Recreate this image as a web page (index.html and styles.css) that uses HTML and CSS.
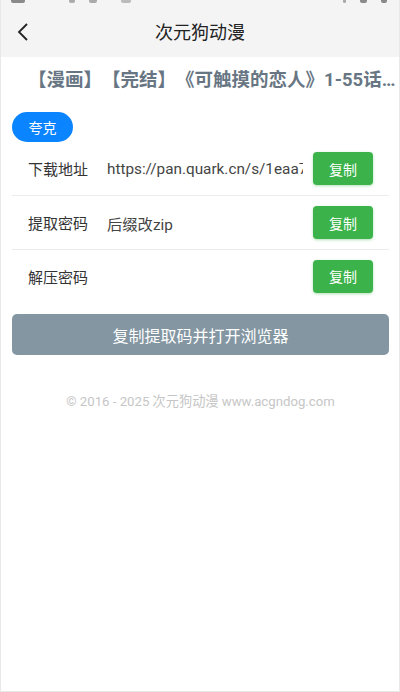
FILE: index.html
```html
<!DOCTYPE html>
<html lang="zh">
<head>
<meta charset="utf-8">
<link rel="stylesheet" href="styles.css">
</head>
<body>
<div class="frame">
  <div class="statusbar">
    <span class="sb-left"><i class="dot d1"></i><i class="dot d2"></i><i class="dot d3"></i><i class="dot d4"></i></span>
    <span class="sb-right"><i class="dot d5"></i><i class="dot d6"></i><i class="dot d7"></i></span>
  </div>
  <header class="topbar">
    <svg class="back" width="14" height="20" viewBox="0 0 14 20"><path d="M11 2 L3 10 L11 18" fill="none" stroke="#222" stroke-width="1.8"/></svg>
    <h1 class="title">次元狗动漫</h1>
  </header>
  <div class="headline"><span class="hl-tag">【漫画】</span>【完结】《可触摸的恋人》1-55话（完结）</div>
  <main class="content">
    <button class="pill">夸克</button>
    <div class="row">
      <span class="label">下载地址</span>
      <span class="value">https://pan.quark.cn/s/1eaa7c9b2f1d</span>
      <button class="copy">复制</button>
    </div>
    <div class="row">
      <span class="label">提取密码</span>
      <span class="value">后缀改zip</span>
      <button class="copy">复制</button>
    </div>
    <div class="row last">
      <span class="label">解压密码</span>
      <span class="value"></span>
      <button class="copy">复制</button>
    </div>
    <button class="open">复制提取码并打开浏览器</button>
    <p class="footer">© 2016 - 2025 次元狗动漫 www.acgndog.com</p>
  </main>
</div>
</body>
</html>
```
FILE: styles.css
```css
* { box-sizing: border-box; }
html, body { margin: 0; padding: 0; background: #fff; }
body {
  font-family: Roboto, "Noto Sans CJK SC", sans-serif;
  color: #333;
  text-spacing-trim: space-all;
}
.frame {
  width: 400px;
  height: 692px;
  border: 1px solid #e8e8e8;
  border-top: none;
  background: #fff;
  overflow: hidden;
}
.statusbar {
  height: 6px;
  background: #f4f4f4;
  display: flex;
  justify-content: space-between;
  padding: 0 10px;
}
.sb-left, .sb-right { display: flex; gap: 14px; align-items: flex-start; }
.dot { display: block; height: 3px; width: 10px; background: #8a8a8a; border-radius: 0 0 2px 2px; }
.d1 { width: 14px; }
.d2 { width: 6px; margin-left: 30px; background: #aaa; }
.d3 { width: 8px; background: #aaa; }
.d4 { width: 10px; margin-left: 10px; background: #bbb; }
.d5 { width: 3px; background: #aaa; }
.d6 { width: 7px; }
.d7 { width: 6px; margin-right: 2px; }
.topbar {
  height: 51px;
  background: #f4f4f4;
  display: flex;
  align-items: center;
  justify-content: center;
  position: relative;
}
.back { position: absolute; left: 15px; top: 16px; }
.title {
  margin: 0;
  font-size: 18px;
  font-weight: 400;
  color: #222;
  padding-bottom: 2px;
}
.headline {
  margin-top: 11px;
  padding-left: 27px;
  font-size: 18.5px;
  font-weight: 700;
  color: #687683;
  white-space: nowrap;
  overflow: hidden;
  text-overflow: ellipsis;
  line-height: 24px;
  width: 402px;
}
.hl-tag { position: relative; }
.hl-tag::after {
  content: "";
  position: absolute;
  left: 10px; top: 20px;
  width: 35px; height: 9px;
  background: #d9dee3;
  border-radius: 2px;
  z-index: -1;
}
.content { padding: 0 10px 0 11px; margin-top: 20px; }
.pill {
  display: block;
  width: 61px;
  height: 30px;
  border: none;
  border-radius: 15px;
  background: #0a84ff;
  color: #fff;
  font-family: inherit;
  font-size: 14px;
  padding: 0;
}
.row {
  display: flex;
  align-items: center;
  height: 54px;
  border-bottom: 1px solid #ececec;
  padding-left: 16px;
}
.row.last { border-bottom: none; height: 52px; }
.label { font-size: 15px; color: #333; width: 79px; flex: none; }
.value {
  font-size: 15.3px;
  color: #444;
  flex: 1;
  min-width: 0;
  white-space: nowrap;
  overflow: hidden;
  margin-right: 10px;
}
.copy {
  flex: none;
  width: 60px;
  height: 33px;
  margin-right: 16px;
  border: none;
  border-radius: 4px;
  background: #3cb34a;
  color: #fff;
  font-family: inherit;
  font-size: 14px;
  box-shadow: 0 1px 3px rgba(60,179,74,0.4);
  padding: 0;
}
.open {
  display: block;
  width: 377px;
  height: 41px;
  margin-top: 12px;
  border: none;
  border-radius: 5px;
  background: #8396a2;
  color: #fff;
  font-family: inherit;
  font-size: 16px;
  padding: 0;
}
.footer {
  margin: 36px 0 0;
  text-align: center;
  font-size: 13.2px;
  color: #c6c6c6;
}
```
